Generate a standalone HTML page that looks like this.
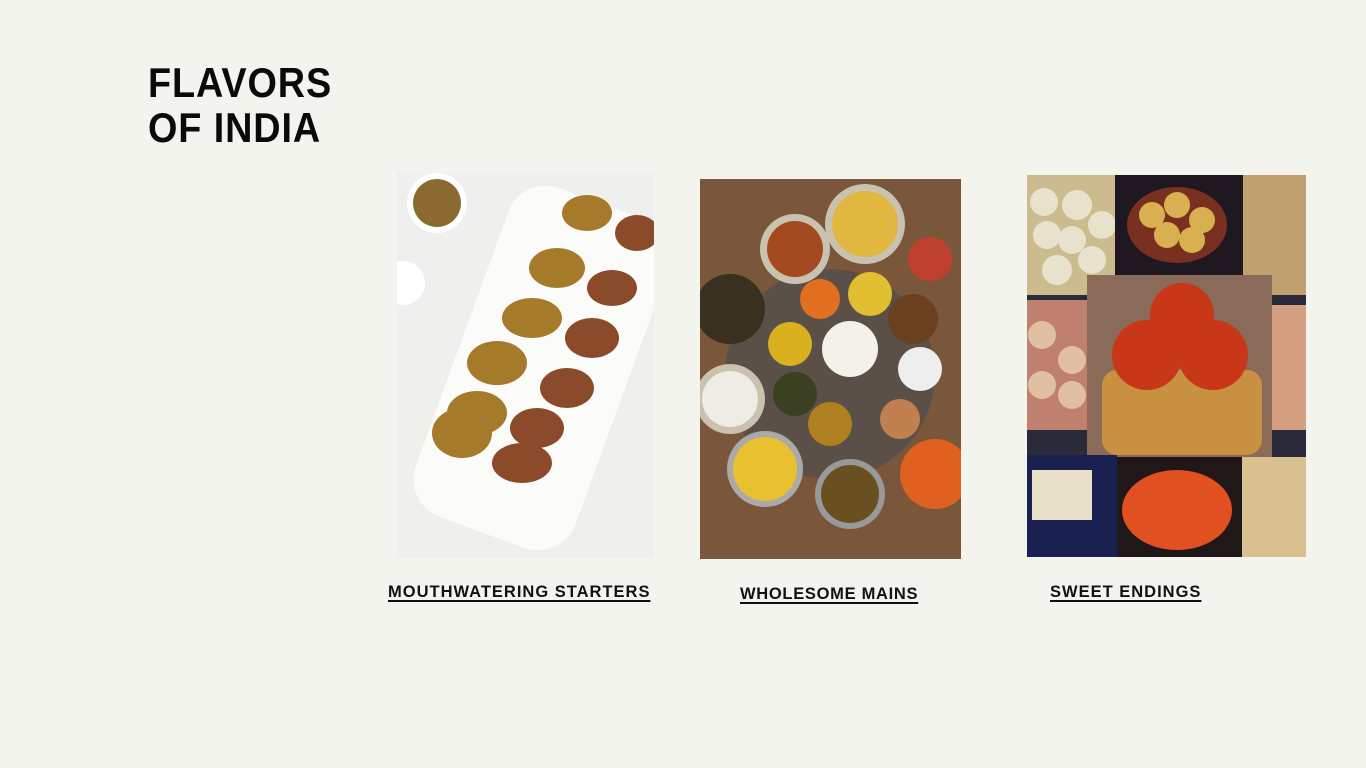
<!DOCTYPE html>
<html><head><meta charset="utf-8"><style>
body{margin:0;width:1366px;height:768px;background:#f4f4ef;position:relative;overflow:hidden;font-family:"Liberation Sans",sans-serif}
.t{position:absolute;left:148px;top:60px;font-weight:bold;font-size:42px;line-height:45px;letter-spacing:1px;color:#0a0a0a;transform:scaleX(0.9);transform-origin:0 0}
.l{position:absolute;font-weight:bold;font-size:16.5px;letter-spacing:1px;color:#111;text-decoration:underline;text-decoration-thickness:2px;text-underline-offset:3px;white-space:nowrap}
.img{position:absolute;overflow:hidden}
</style></head><body>
<div class="t">FLAVORS<br>OF INDIA</div>

<div class="img" style="left:397px;top:173px;width:257px;height:385px;background:#f1f1f0">
<svg width="257" height="385">
<rect x="0" y="0" width="257" height="385" fill="#efefee"/>
<circle cx="40" cy="30" r="30" fill="#fff"/><circle cx="40" cy="30" r="24" fill="#8a6a30"/>
<circle cx="6" cy="110" r="22" fill="#fff"/>
<rect x="60" y="20" width="170" height="350" rx="40" transform="rotate(20 145 195)" fill="#fbfbfa"/>
<g fill="#a57a2a"><ellipse cx="190" cy="40" rx="25" ry="18"/><ellipse cx="160" cy="95" rx="28" ry="20"/><ellipse cx="135" cy="145" rx="30" ry="20"/><ellipse cx="100" cy="190" rx="30" ry="22"/><ellipse cx="80" cy="240" rx="30" ry="22"/><ellipse cx="65" cy="260" rx="30" ry="25"/></g>
<g fill="#8b4a2a"><ellipse cx="240" cy="60" rx="22" ry="18"/><ellipse cx="215" cy="115" rx="25" ry="18"/><ellipse cx="195" cy="165" rx="27" ry="20"/><ellipse cx="170" cy="215" rx="27" ry="20"/><ellipse cx="140" cy="255" rx="27" ry="20"/><ellipse cx="125" cy="290" rx="30" ry="20"/></g>
</svg></div>

<div class="img" style="left:700px;top:179px;width:261px;height:380px;background:#6a4a32">
<svg width="261" height="380">
<rect width="261" height="380" fill="#7a563a"/>
<circle cx="130" cy="195" r="105" fill="#5b5048"/>
<circle cx="165" cy="45" r="40" fill="#c9c2b0"/><circle cx="165" cy="45" r="33" fill="#e0b840"/>
<circle cx="95" cy="70" r="35" fill="#c9c2b0"/><circle cx="95" cy="70" r="28" fill="#a34a20"/>
<circle cx="30" cy="130" r="35" fill="#3a3020"/>
<circle cx="30" cy="220" r="35" fill="#c9c2b0"/><circle cx="30" cy="220" r="28" fill="#eeece4"/>
<circle cx="150" cy="170" r="28" fill="#f3f1ea"/>
<circle cx="90" cy="165" r="22" fill="#d9b020"/><circle cx="120" cy="120" r="20" fill="#e07020"/><circle cx="170" cy="115" r="22" fill="#e0c030"/><circle cx="213" cy="140" r="25" fill="#6a4020"/><circle cx="220" cy="190" r="22" fill="#eee"/><circle cx="95" cy="215" r="22" fill="#3a4020"/><circle cx="130" cy="245" r="22" fill="#b08020"/><circle cx="200" cy="240" r="20" fill="#c08050"/>
<circle cx="65" cy="290" r="38" fill="#aaa"/><circle cx="65" cy="290" r="32" fill="#e8c030"/>
<circle cx="150" cy="315" r="35" fill="#999"/><circle cx="150" cy="315" r="29" fill="#6a5020"/>
<circle cx="235" cy="295" r="35" fill="#e06020"/>
<circle cx="230" cy="80" r="22" fill="#c04030"/>
</svg></div>

<div class="img" style="left:1027px;top:175px;width:279px;height:382px;background:#2a2a3a">
<svg width="279" height="382">
<rect width="90" height="120" fill="#cdbb90"/>
<g fill="#e8e2cc"><circle cx="17" cy="27" r="14"/><circle cx="50" cy="30" r="15"/><circle cx="75" cy="50" r="14"/><circle cx="20" cy="60" r="14"/><circle cx="45" cy="65" r="14"/><circle cx="30" cy="95" r="15"/><circle cx="65" cy="85" r="14"/></g>
<rect x="88" width="128" height="100" fill="#201820"/><ellipse cx="150" cy="50" rx="50" ry="38" fill="#7a3020"/>
<g fill="#d8b050"><circle cx="125" cy="40" r="13"/><circle cx="150" cy="30" r="13"/><circle cx="175" cy="45" r="13"/><circle cx="140" cy="60" r="13"/><circle cx="165" cy="65" r="13"/></g>
<rect x="216" width="63" height="120" fill="#c0a070"/>
<rect x="0" y="125" width="60" height="130" fill="#c08070"/><g fill="#e0c0a0"><circle cx="15" cy="160" r="14"/><circle cx="45" cy="185" r="14"/><circle cx="15" cy="210" r="14"/><circle cx="45" cy="220" r="14"/></g>
<rect x="60" y="100" width="185" height="182" fill="#8a6a58"/>
<rect x="75" y="195" width="160" height="85" rx="15" fill="#c89040"/>
<g fill="#c83818"><circle cx="120" cy="180" r="35"/><circle cx="186" cy="180" r="35"/><circle cx="155" cy="140" r="32"/></g>
<rect x="245" y="130" width="34" height="125" fill="#d4a080"/>
<rect x="0" y="280" width="90" height="102" fill="#1a2050"/><rect x="5" y="295" width="60" height="50" fill="#e8e0c8"/>
<rect x="90" y="282" width="125" height="100" fill="#201818"/><ellipse cx="150" cy="335" rx="55" ry="40" fill="#e05020"/>
<rect x="215" y="282" width="64" height="100" fill="#d8c090"/>
</svg></div>

<div class="l" style="left:388px;top:583px">MOUTHWATERING STARTERS</div>
<div class="l" style="left:740px;top:585px;letter-spacing:0.7px">WHOLESOME MAINS</div>
<div class="l" style="left:1050px;top:583px">SWEET ENDINGS</div>
</body></html>
